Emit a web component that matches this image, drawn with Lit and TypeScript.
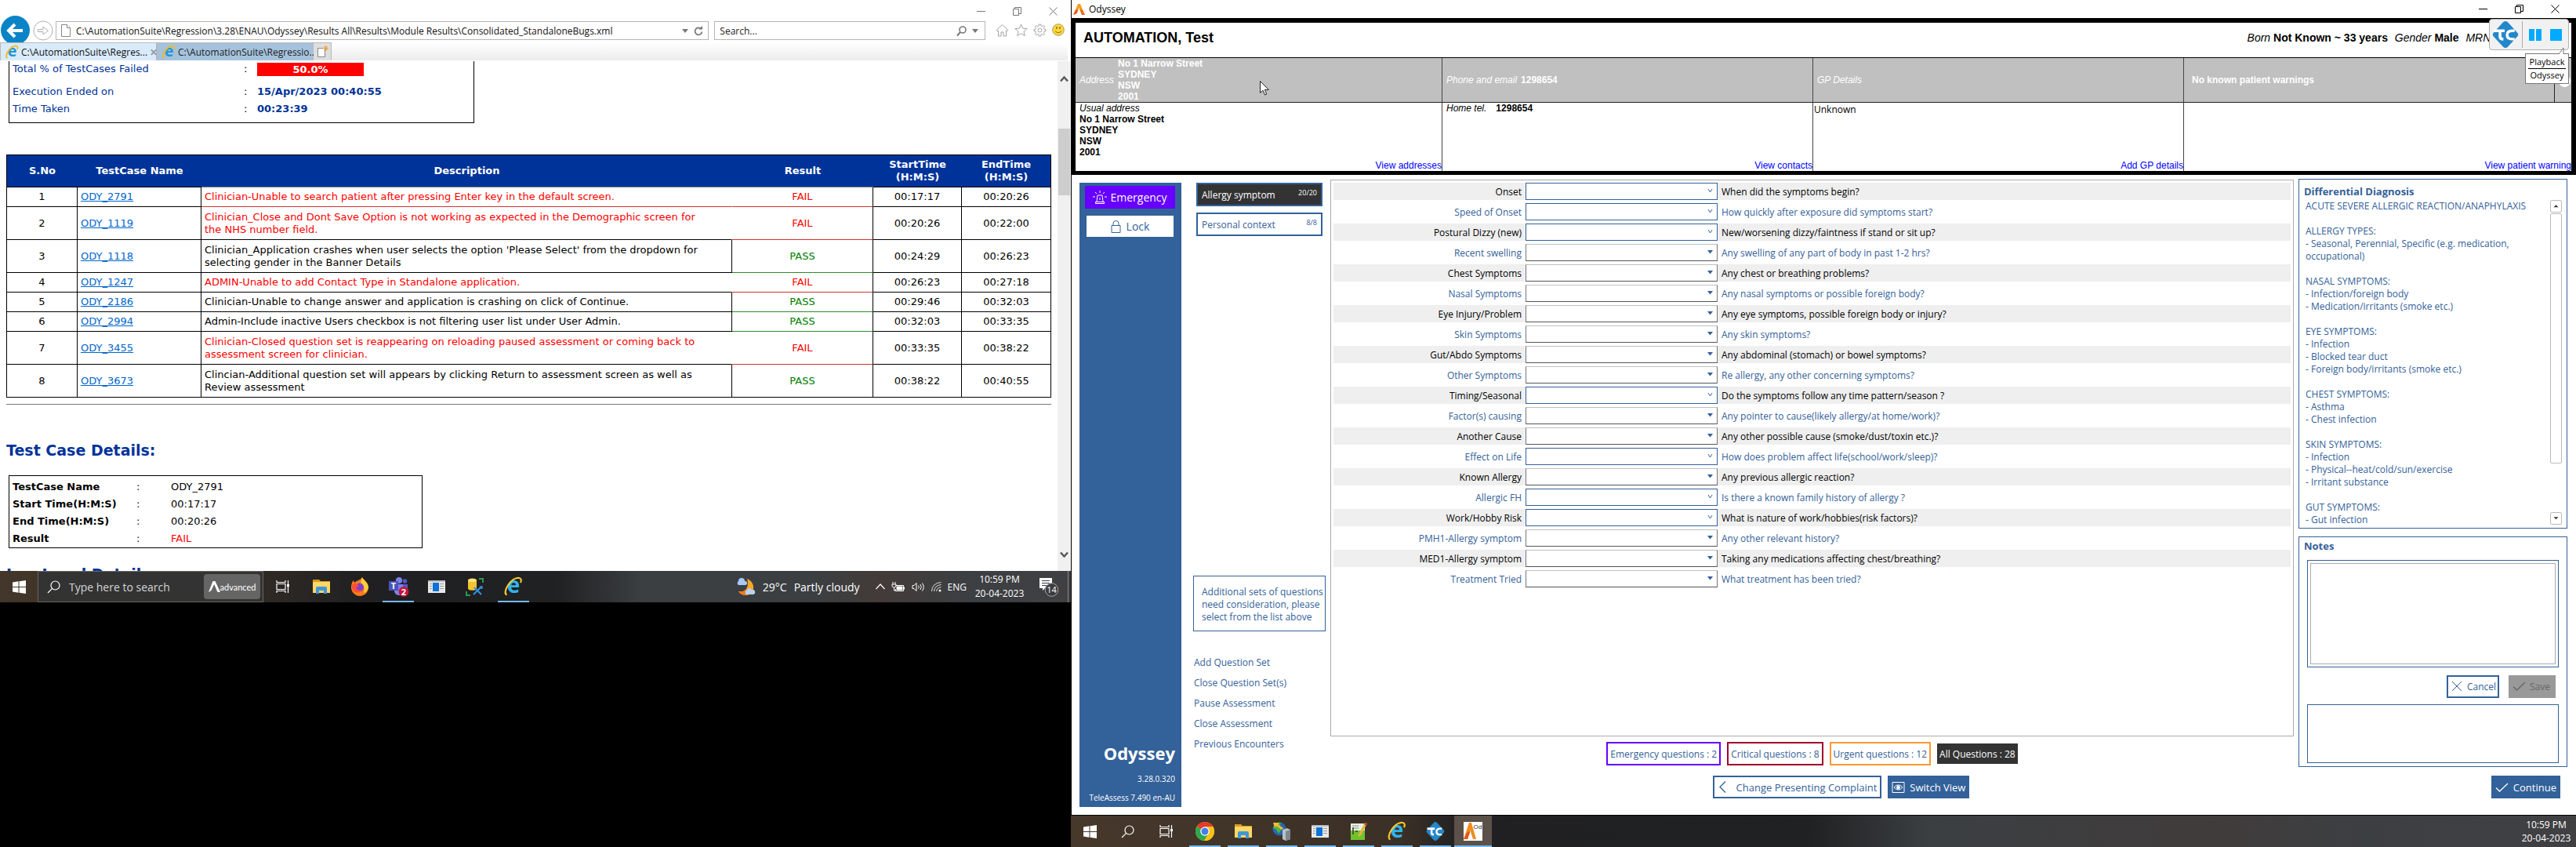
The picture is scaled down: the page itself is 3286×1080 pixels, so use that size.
import { LitElement, html, css, svg, nothing } from "lit";
import { customElement, property } from "lit/decorators.js";
import { classMap } from "lit/directives/class-map.js";

/* ---------- shared icons ---------- */

const minimizeIcon = html`<svg class="ctl" viewBox="0 0 11 11"><path d="M0 5.5h11" stroke="currentColor" /></svg>`;
const restoreIcon = html`<svg class="ctl" viewBox="0 0 11 11" fill="none" stroke="currentColor">
  <path d="M.5 2.5h7v8h-7z" /><path d="M2.5 2.5v-2h8v8h-3" />
</svg>`;
const closeIcon = html`<svg class="ctl" viewBox="0 0 11 11"><path d="M.5.5l10 10M10.5.5l-10 10" stroke="currentColor" /></svg>`;

const windowsIcon = html`<svg width="17" height="17" viewBox="0 0 17 17" fill="#fff">
  <path d="M0 2.4 7.5 1.3v6.7H0zM8.5 1.2 17 0v8H8.5zM0 9h7.5v6.7L0 14.6zM8.5 9H17v8l-8.5-1.2z" />
</svg>`;
const lensIcon = html`<svg width="17" height="17" viewBox="0 0 17 17" fill="none" stroke="#fff" stroke-width="1.2">
  <circle cx="10.5" cy="6.5" r="5.5" /><path d="M6.6 10.4 1 16" />
</svg>`;
const taskViewIcon = html`<svg width="18" height="16" viewBox="0 0 18 16" fill="none" stroke="#fff" stroke-width="1.2">
  <path d="M1 0v2.5h11V0M1 16v-2.5h11V16M1 4.5h11v7H1zM15.5 0v16" /><path d="M14 5h3v3h-3z" fill="#fff" stroke="none" />
</svg>`;
const folderIcon = html`<svg width="24" height="22" viewBox="0 0 24 22">
  <path d="M1 2h8l2 2h12v15H1z" fill="#d99b1c" /><path d="M1 5h22v14H1z" fill="#ffd766" />
  <path d="M5 20v-7q0-2 2-2h10q2 0 2 2v7h-4v-4H9v4z" fill="#3f97d8" />
</svg>`;
const firefoxIcon = html`<svg width="24" height="24" viewBox="0 0 24 24">
  <path d="M12 3c2-1 2-2 3-3 1 3 7 6 8 12 .5 7-5 12-11 12S1 19 1 13C1 9 2 6 4 4l1 3c2-2 5-3 7-4z" fill="#ff7b1c" />
  <path d="M15 0c1 3 7 6 8 12 0 4-3 7-6 8 2-7-1-11-4-13 1-3 1-5 2-7z" fill="#ffcf3a" />
  <circle cx="11.5" cy="13" r="5.5" fill="#7a3fd0" /><path d="M2 10c3-3 6-2 8 0 1 2-1 3-3 3 1 4 6 5 10 2-2 5-12 7-15-1z" fill="#ff4f38" />
</svg>`;
const teamsIcon = html`<svg width="26" height="26" viewBox="0 0 26 26">
  <circle cx="14" cy="5" r="4" fill="#7b83eb" /><circle cx="21.5" cy="6" r="2.8" fill="#5059c9" />
  <path d="M17 10h8v7q0 4-4 4h-4z" fill="#5059c9" /><path d="M8 10h11v9q0 5-5 5t-6-5z" fill="#7b83eb" />
  <path d="M1 6h12v12H1z" fill="#4b53bc" />
  <text x="7" y="16" font-size="11" font-weight="bold" text-anchor="middle" fill="#fff">T</text>
  <circle cx="20" cy="19.5" r="6.5" fill="#c4153c" />
  <text x="20" y="23.5" font-size="11" font-weight="bold" text-anchor="middle" fill="#fff">2</text>
</svg>`;
const appWindowIcon = html`<svg width="22" height="16" viewBox="0 0 22 16">
  <path d="M0 0h22v16H0z" fill="#e9e9e9" /><path d="M0 0h22v2H0z" fill="#bcbcbc" />
  <path d="M6 3h8v11H6z" fill="#0a72d8" /><path d="M2 4h3v1H2zM2 7h3v1H2zM2 10h3v1H2zM15 4h5v1h-5zM15 7h5v1h-5zM15 10h5v1h-5z" fill="#9a9a9a" />
</svg>`;
const databaseIcon = html`<svg width="23" height="23" viewBox="0 0 23 23">
  <path d="M17 1h5v5M6 22H1v-5" fill="none" stroke="#2b9a4b" stroke-width="2" />
  <path d="M3 2.5v11c0 3 11 3 11 0v-11z" fill="#f3c230" /><ellipse cx="8.5" cy="2.8" rx="5.5" ry="2.3" fill="#ffe37a" />
  <path d="M10 21l9-9M11 12l9 9" stroke="#2f8fe0" stroke-width="2.2" /><circle cx="20" cy="12" r="2" fill="#2f8fe0" />
</svg>`;
const explorerIcon = html`<svg width="24" height="24" viewBox="0 0 24 24">
  <text x="12" y="20" font-size="28" font-weight="bold" text-anchor="middle" fill="#2fb4ee">e</text>
  <path d="M3.5 22.5C-3 20 9-1 19.500 1c3 .6 2.500 4 1.500 6" fill="none" stroke="#f6c52c" stroke-width="2.2" />
</svg>`;
const smallExplorerIcon = html`<svg width="17" height="17" viewBox="0 0 24 24">
  <text x="12" y="20" font-size="28" font-weight="bold" text-anchor="middle" fill="#2396d8">e</text>
  <path d="M3.5 22.5C-3 20 9-1 19.500 1c3 .6 2.500 4 1.500 6" fill="none" stroke="#f0b926" stroke-width="2.6" />
</svg>`;
const chromeIcon = html`<svg width="24" height="24" viewBox="0 0 24 24">
  <circle cx="12" cy="12" r="12" fill="#fbc116" />
  <path d="M12 12 1.600 6A12 12 0 0 1 22.400 6z" fill="#e33b2e" /><path d="M1.600 6A12 12 0 0 0 11 24l5.500-9.500L12 12z" fill="#2da94f" />
  <path d="M12 6h10.400A12 12 0 0 1 11 24l6-9z" fill="#fbc116" />
  <circle cx="12" cy="12" r="5.8" fill="#fff" /><circle cx="12" cy="12" r="4.5" fill="#4080ee" />
</svg>`;
const serverIcon = html`<svg width="24" height="24" viewBox="0 0 24 24">
  <circle cx="9" cy="9" r="8.5" fill="#2368b4" /><path d="M3 4q4-4 8-3l-2 5 3 3-4 6-3-5-4-2z" fill="#56b043" />
  <path d="M1 1h8l-2 2 7 5-2 2-7-5-2 2z" fill="#f6c02e" />
  <path d="M13 10l6-2 4 2v12l-6 2-4-2z" fill="#b9c1c6" /><path d="M17 12l6-2v12l-6 2z" fill="#7d878d" />
</svg>`;
const noteEditIcon = html`<svg width="22" height="24" viewBox="0 0 22 24">
  <path d="M1 2h18v21H1z" fill="#e6eee0" /><path d="M1 11h18v12H1z" fill="#6fc22d" />
  <path d="M3 5h8M3 8h8" stroke="#8a9b85" /><path d="M4 7v9M7 12h3" stroke="#3a3a3a" stroke-width="1.5" />
  <path d="M11 16 19 1l3 1-8 15-3 2z" fill="#e9b23c" /><path d="m19 1 3 1-1 3-3-2z" fill="#c14536" />
</svg>`;
const odysseyAppIcon = html`<svg width="24" height="24" viewBox="0 0 24 24">
  <path d="M0 0h24v24H0z" fill="#fff" />
  <path d="M7 1h3l6 21h-4L8.500 11 5 22H0z" fill="#f28c1c" /><path d="M5 13 0 22h5l3.500-10z" fill="#e4531b" />
  <text x="18" y="9" font-size="8" text-anchor="middle" fill="#333">Od</text>
</svg>`;
const testCompleteIcon = (size: number) => html`<svg width=${size} height=${size} viewBox="0 0 32 32">
  <path d="M16 0q2 0 3 1.500L30.500 14q1.500 2 0 4L19 30.500q-3 3-6 0L1.500 18q-1.500-2 0-4L13 1.500Q14 0 16 0z" fill="#2487c9" />
  <path d="M2 11.500h13M9.500 11.500v7q0 3 4 3" fill="none" stroke="#fff" stroke-width="3.4" />
  <path d="M27 11.500h-3q-6 0-6 5t6 5h3" fill="none" stroke="#fff" stroke-width="3.2" />
</svg>`;

/* ---------- taskbar ---------- */

interface TaskItem { name: string; icon: unknown; running?: boolean; active?: boolean; }

@customElement("task-bar")
export class TaskBar extends LitElement {
  @property({ attribute: false }) items: TaskItem[] = [];
  @property({ type: Boolean }) full = false;

  static styles = css`
    :host { display: block; font-family: "Open Sans", "Noto Sans", sans-serif; color: #fff; }
    svg { overflow: visible; }
    .bar { display: flex; align-items: stretch; height: 40px; background: linear-gradient(90deg, #43362a 0, #3a3026 18%, #202022 34%, #202122 52%, #3b3f42 60%, #3b3f42 76%, #433b38 82%, #3c3f42 90%, #404043 100%); }
    .bar.full { background: linear-gradient(90deg, #46382b 0, #3b3026 22%, #202022 26%, #202122 49%, #3b3f42 57%, #413c3c 76%, #3c3f42 86%, #404043 100%); }
    button { all: unset; box-sizing: border-box; display: flex; align-items: center; justify-content: center; width: 49px; }
    button.start { width: 48px; }
    button.running { border-bottom: 2px solid #76b9ed; margin: 0 4px 0 5px; width: 40px; padding-top: 2px; }
    button.active { background: #5b5148; margin: 0; width: 48px; }
    .search { display: flex; align-items: center; box-sizing: border-box; width: 288px; background: #333; border: 1px solid #6a665f; padding: 0 3px 0 11px; gap: 11px; }
    .search input { all: unset; flex: 1; min-width: 0; font-size: 14px; color: #ddd; }
    .search input::placeholder { color: #d5d5d5; opacity: 1; }
    .chip { display: flex; align-items: center; justify-content: center; width: 72px; height: 32px; border-radius: 4px; background: #656565; font-size: 11px; font-family: Lato, sans-serif; }
    .grow { flex: 1; }
    .weather { display: flex; align-items: center; gap: 9px; font-size: 14px; margin-right: 20px; }
    .tray { display: flex; align-items: center; gap: 8px; font-size: 12px; }
    .clock { display: flex; flex-direction: column; align-items: center; justify-content: center; font-size: 12px; line-height: 18px; width: 84px; }
    .full .clock { padding-right: 4px; width: 68px; line-height: 17px; }
    .notes { width: 42px; display: flex; align-items: center; justify-content: center; margin-right: 3px; }
    .edge { width: 3px; border-left: 1px solid #85878a; }
  `;

  render() {
    return html`<div class=${classMap({ bar: true, full: this.full })}>
      <button class="start" aria-label="Start">${windowsIcon}</button>
      ${this.full
        ? html`<button aria-label="Search">${lensIcon}</button>`
        : html`<div class="search">
            ${lensIcon}
            <input type="text" aria-label="Type here to search" placeholder="Type here to search" />
            <span class="chip">
              <svg width="15" height="14" viewBox="0 0 15 14"><path d="M5.500 0h3L15 14h-3.500L7.200 4 3.500 12 0 14z" fill="#fff" /></svg>advanced
            </span>
          </div>`}
      <button aria-label="Task view">${taskViewIcon}</button>
      ${this.items.map((item) => html`<button class=${classMap({ running: !!item.running, active: !!item.active })} aria-label=${item.name}>${item.icon}</button>`)}
      <span class="grow"></span>
      ${this.full ? nothing : html`
        <div class="weather">
          <svg width="25" height="23" viewBox="0 0 25 23">
            <path d="M14 1c12 5 10 20-1 21-5 0-8-2-10-5 10 2 14-7 11-16z" fill="#f9a825" />
            <path d="M3 17c5 1 9 0 11-4l6 5c-5 5-13 5-17-1z" fill="#ef7a1c" />
            <path d="M3 9a3 3 0 0 1 0-5 4 4 0 0 1 8 0 2.500 2.500 0 0 1 1 5z" fill="#a9c8f5" />
            <path d="M13 21a3 3 0 0 1 0-5 4 4 0 0 1 7-1 3 3 0 0 1 2 6z" fill="#b8d2f7" />
          </svg>
          <span>29°C</span><span>Partly cloudy</span>
        </div>
        <div class="tray">
          <svg width="12" height="8" viewBox="0 0 12 8"><path d="m.5 7 5.500-6 5.500 6" fill="none" stroke="#fff" stroke-width="1.2" /></svg>
          <svg width="18" height="13" viewBox="0 0 18 13" fill="none" stroke="#fff"><path d="M5.500 4.500h10v7h-10V9M16.500 6.500v3M2 0v3M5 0v3M1 3h5v2q0 2-2.500 2T1 5zM3.500 7v4h2" /><path d="M7 6h7v4H7z" fill="#fff" /></svg>
          <svg width="17" height="13" viewBox="0 0 17 13" fill="none" stroke="#fff"><path d="M1 4.500h2l3-3v10l-3-3H1zM8.500 4.500q1.500 2 0 4M11 3q2.500 3.500 0 7M13.500 1.500q3.500 5 0 10" /></svg>
          <svg width="13" height="13" viewBox="0 0 13 13" fill="none" stroke="#ddd"><path d="M.5 12Q1 1.500 12.500.5M3.500 12q.5-7.500 9-8.500M6.500 12q.5-4.500 6-5.500" /><circle cx="11" cy="11" r="1.5" fill="#fff" stroke="none" /></svg>
          <span>ENG</span>
        </div>`}
      <div class="clock"><span>10:59 PM</span><span>20-04-2023</span></div>
      ${this.full ? nothing : html`
        <div class="notes">
          <svg width="26" height="26" viewBox="0 0 26 26">
            <path d="M1 2h16v13H8l-3 3v-3H1z" fill="#fff" /><path d="M4 5.500h10M4 8.500h10M4 11.500h7" stroke="#3a3d40" />
            <circle cx="16.5" cy="17" r="8.3" fill="#3a3d40" stroke="#a5a5a5" />
            <text x="16.5" y="21" font-size="11" text-anchor="middle" fill="#fff">14</text>
          </svg>
        </div>
        <span class="edge"></span>`}
    </div>`;
  }
}

/* ---------- browser with the test report ---------- */

interface TestRow { id: string; text: string; pass: boolean; start: string; end: string; tall?: boolean; }

const testRows: TestRow[] = [
  { id: "ODY_2791", text: "Clinician-Unable to search patient after pressing Enter key in the default screen.", pass: false, start: "00:17:17", end: "00:20:26" },
  { id: "ODY_1119", text: "Clinician_Close and Dont Save Option is not working as expected in the Demographic screen for the NHS number field.", pass: false, start: "00:20:26", end: "00:22:00", tall: true },
  { id: "ODY_1118", text: "Clinician_Application crashes when user selects the option 'Please Select' from the dropdown for selecting gender in the Banner Details", pass: true, start: "00:24:29", end: "00:26:23", tall: true },
  { id: "ODY_1247", text: "ADMIN-Unable to add Contact Type in Standalone application.", pass: false, start: "00:26:23", end: "00:27:18" },
  { id: "ODY_2186", text: "Clinician-Unable to change answer and application is crashing on click of Continue.", pass: true, start: "00:29:46", end: "00:32:03" },
  { id: "ODY_2994", text: "Admin-Include inactive Users checkbox is not filtering user list under User Admin.", pass: true, start: "00:32:03", end: "00:33:35" },
  { id: "ODY_3455", text: "Clinician-Closed question set is reappearing on reloading paused assessment or coming back to assessment screen for clinician.", pass: false, start: "00:33:35", end: "00:38:22", tall: true },
  { id: "ODY_3673", text: "Clincian-Additional question set will appears by clicking Return to assessment screen as well as Review assessment", pass: true, start: "00:38:22", end: "00:40:55", tall: true },
];

@customElement("report-browser")
export class ReportBrowser extends LitElement {
  static styles = css`
    :host { display: flex; flex-direction: column; min-height: 0; background: #fff; font-family: "Open Sans", "Noto Sans", sans-serif; font-size: 12px; color: #111; }
    svg { flex: none; overflow: visible; }
    .title { display: flex; justify-content: flex-end; height: 20px; color: #777; }
    .title button, .tools button { all: unset; display: flex; justify-content: center; align-items: center; }
    .title button { width: 46px; padding-top: 8px; }
    .ctl { width: 11px; height: 11px; }
    .nav { display: flex; height: 34px; padding-right: 4px; }
    .nav > a { display: flex; }
    .back svg { overflow: hidden; }
    .forward { padding: 6px 3px 0 4px; }
    .field { display: flex; align-items: center; box-sizing: border-box; height: 24px; margin-top: 7px; border: 1px solid #b5b5b5; padding: 0 6px; gap: 7px; }
    .address { flex: 840; margin-right: 7px; }
    .find { flex: 338; margin-right: 9px; padding-right: 8px; }
    .field input { all: unset; flex: 1; min-width: 0; font-size: 12px; height: 20px; }
    .field input::placeholder { color: #222; opacity: 1; }
    .tools { display: flex; height: 24px; margin-top: 6px; }
    .tools button { width: 24px; }
    .tabs { display: flex; height: 23px; background: linear-gradient(#fff, #ececec); margin-bottom: 1px; border-right: 4px solid #fff; }
    .tab { display: flex; align-items: center; box-sizing: border-box; width: 200px; padding: 0 4px 0 6px; gap: 3px; border: 1px solid #b9b9b9; border-bottom: 0; background: #d9ebfa; white-space: nowrap; }
    .tab.other { background: #a5c2dc; color: #222; }
    .tab .x { margin-left: auto; color: #8c9aa6; font-weight: bold; }
    .new { display: flex; align-items: center; justify-content: center; width: 23px; box-sizing: border-box; border: 1px solid #b9b9b9; border-left: 0; border-bottom: 0; background: #dedede; }
    .view { display: flex; flex: 1; min-height: 0; }
    .page { flex: 1; min-width: 0; overflow: hidden; padding: 0 8px; font-family: "DejaVu Sans", sans-serif; font-size: 13px; line-height: 16px; color: #000; }
    .bar { flex: none; display: flex; flex-direction: column; align-items: center; width: 17px; background: #f0f0f0; }
    .bar .thumb { width: 15px; height: 85px; background: #cdcdcd; margin: 59px 0 auto; }
    .bar svg { margin: 18px 0 0; }
    .bar svg.down { margin: 0 0 16px; }
    table { border-spacing: 0; }
    .box { border: 1px solid #000; margin-left: 3px; padding: 0 4px; line-height: 22px; table-layout: fixed; }
    .box td, .box th { padding: 0; text-align: left; height: 22px; }
    .summary { width: 594px; border-top: 0; padding-bottom: 6px; color: #039; }
    .summary th { font-weight: normal; }
    .summary .first td, .summary .first th { height: 20px; line-height: 20px; }
    .summary .second td, .summary .second th { padding-top: 8px; }
    .summary td { font-weight: bold; }
    .summary td.colon { font-weight: normal; color: #000; }
    .failed { display: block; width: 136px; height: 17px; line-height: 18px; background: red; color: #fff; text-align: center; }
    .results { width: 100%; margin-top: 40px; table-layout: fixed; border-left: 1px solid #000; }
    .results th { height: 42px; box-sizing: border-box; padding: 0; background: #039; color: #fff; border-top: 1px solid #000; border-bottom: 1px solid #000; }
    .results th.open { border-bottom-color: #777; }
    .results th:last-child { border-right: 1px solid #000; }
    .results td { box-sizing: border-box; height: 25px; padding: 4px; border-right: 1px solid #000; border-bottom: 1px solid #000; text-align: center; }
    .results .tall td { height: 42px; }
    .results td.left { text-align: left; }
    .results td.desc { padding-right: 32px; }
    .fail td.desc { color: red; border-right-color: transparent; }
    .fail:first-child td.desc { border-bottom-color: #c33; }
    .fail td.result { color: red; border-bottom-color: #c33; }
    .pass td.result { color: green; border-bottom-color: #2e8b2e; }
    tr:last-child td.result { border-bottom-color: #000; }
    .results a { color: #06c; }
    hr { border: 0; height: 1px; background: #777; margin: 8px 0 46px; }
    h2 { margin: 0 0 20px; font-size: 19px; line-height: 24px; color: #039; }
    .case { width: 528px; padding-top: 3px; margin-bottom: 21px; }
    .case .bad { color: red; }
  `;

  render() {
    return html`
      <div class="title">
        <button aria-label="Minimize">${minimizeIcon}</button>
        <button aria-label="Restore">${restoreIcon}</button>
        <button aria-label="Close">${closeIcon}</button>
      </div>
      <div class="nav">
        <a class="back" href="#" aria-label="Back"><svg width="38" height="34" viewBox="0 0 38 34"><circle cx="19.5" cy="18.5" r="18.5" fill="#0a84c6" /><path d="M29 19H12M19 11l-8 8 8 8" fill="none" stroke="#fff" stroke-width="4" /></svg></a>
        <a class="forward" href="#" aria-label="Forward"><svg width="26" height="26" viewBox="0 0 26 26" fill="none" stroke="#b0b0b0"><circle cx="13" cy="13" r="12" /><path d="M6.500 11.500h6.500V8l6.500 5-6.500 5v-3.500H6.500z" /></svg></a>
        <div class="field address">
          <svg width="12" height="16" viewBox="0 0 12 16" fill="#fff" stroke="#888"><path d="M.5.500h7l4 4v11H.5z" /><path d="M7.500.5v4h4" /></svg>
          <input type="text" aria-label="Address" .value=${"C:\\AutomationSuite\\Regression\\3.28\\ENAU\\Odyssey\\Results All\\Results\\Module Results\\Consolidated_StandaloneBugs.xml"} />
          <svg width="8" height="5" viewBox="0 0 8 5"><path d="M0 0h8L4 5z" fill="#777" /></svg>
          <svg width="12" height="13" viewBox="0 0 12 13"><path d="M9.500 4A4.500 4.500 0 1 0 10.500 7.500" fill="none" stroke="#777" stroke-width="1.8" /><path d="M6 4.500h5V0z" fill="#777" /></svg>
        </div>
        <div class="field find">
          <input type="text" aria-label="Search" placeholder="Search..." />
          <svg width="13" height="13" viewBox="0 0 13 13" fill="none" stroke="#777" stroke-width="1.6"><circle cx="8" cy="5" r="4" /><path d="M5 8 1 12.500" stroke-width="2" /></svg>
          <svg width="8" height="5" viewBox="0 0 8 5"><path d="M0 0h8L4 5z" fill="#777" /></svg>
        </div>
        <div class="tools">
          <button aria-label="Home"><svg width="17" height="17" viewBox="0 0 17 17" fill="none" stroke="#a3a3a3"><path d="m1 8.500 7.500-7 7.500 7-1.500 1.300-1-.9V16h-3.500v-5h-3v5H3.500V8.900l-1 .9z" /></svg></button>
          <button aria-label="Favorites"><svg width="17" height="17" viewBox="0 0 17 17" fill="none" stroke="#a3a3a3"><path d="m8.500 1 2.200 5.200 5.500.4-4.200 3.600 1.300 5.500-4.800-3-4.800 3L5 10.200.8 6.600l5.500-.4z" /></svg></button>
          <button aria-label="Tools"><svg width="17" height="17" viewBox="0 0 17 17" fill="none" stroke="#a3a3a3"><circle cx="8.5" cy="8.5" r="2.5" /><path d="M7.500 1h2l.4 2 1.500.7 1.700-1.200 1.500 1.500-1.200 1.700.6 1.500 2 .4v2l-2 .4-.6 1.500 1.200 1.700-1.500 1.500-1.700-1.200-1.500.6-.4 2h-2l-.4-2-1.500-.6-1.700 1.200-1.500-1.500 1.200-1.700L3 10 1 9.600v-2L3 7.200l.6-1.500L2.400 4l1.500-1.500 1.700 1.200L7.100 3z" /></svg></button>
          <button aria-label="Feedback"><svg width="16" height="16" viewBox="0 0 16 16"><circle cx="8" cy="8" r="7.3" fill="#ffd83c" stroke="#a89a6a" /><path d="M6 4v3M10 4v3" stroke="#8a6d1a" stroke-width="1.5" /><path d="M4 9.500q4 4.500 8 0" fill="none" stroke="#8a6d1a" /></svg></button>
        </div>
      </div>
      <div class="tabs">
        <div class="tab">${smallExplorerIcon}<span>C:\\AutomationSuite\\Regres...</span><span class="x">✕</span></div>
        <div class="tab other">${smallExplorerIcon}<span>C:\\AutomationSuite\\Regressio...</span></div>
        <div class="new"><svg width="15" height="16" viewBox="0 0 15 16"><path d="M1.500 3.500h9v11h-9z" fill="#fff" stroke="#888" /><path d="M11.500 0v7M8 3.500h7M9 1l5 5M14 1 9 6" stroke="#f0a030" /></svg></div>
      </div>
      <div class="view">
        <div class="page">
          <table class="box summary">
            <colgroup><col style="width:295px" /><col style="width:17px" /><col /></colgroup>
            <tr class="first"><th>Total % of TestCases Failed</th><td class="colon">:</td><td><span class="failed">50.0%</span></td></tr>
            <tr class="second"><th>Execution Ended on</th><td class="colon">:</td><td>15/Apr/2023 00:40:55</td></tr>
            <tr><th>Time Taken</th><td class="colon">:</td><td>00:23:39</td></tr>
          </table>
          <table class="results">
            <colgroup><col style="width:90px" /><col style="width:158px" /><col /><col style="width:180px" /><col style="width:113px" /><col style="width:114px" /></colgroup>
            <thead><tr><th>S.No</th><th>TestCase Name</th><th class="open">Description</th><th class="open">Result</th><th>StartTime<br />(H:M:S)</th><th>EndTime<br />(H:M:S)</th></tr></thead>
            <tbody>
              ${testRows.map((row, i) => html`<tr class=${classMap({ tall: !!row.tall, pass: row.pass, fail: !row.pass })}>
                <td>${i + 1}</td><td class="left"><a href="#${row.id}">${row.id}</a></td><td class="left desc">${row.text}</td>
                <td class="result">${row.pass ? "PASS" : "FAIL"}</td><td>${row.start}</td><td>${row.end}</td>
              </tr>`)}
            </tbody>
          </table>
          <hr />
          <h2>Test Case Details:</h2>
          <table class="box case">
            <colgroup><col style="width:158px" /><col style="width:44px" /><col /></colgroup>
            <tr><th>TestCase Name</th><td>:</td><td>ODY_2791</td></tr>
            <tr><th>Start Time(H:M:S)</th><td>:</td><td>00:17:17</td></tr>
            <tr><th>End Time(H:M:S)</th><td>:</td><td>00:20:26</td></tr>
            <tr><th>Result</th><td>:</td><td class="bad">FAIL</td></tr>
          </table>
          <h2>Log Level Details:</h2>
        </div>
        <div class="bar" aria-hidden="true">
          <svg width="11" height="9" viewBox="0 0 11 9"><path d="m1 7.500 4.500-5 4.500 5" fill="none" stroke="#555" stroke-width="2.4" /></svg>
          <span class="thumb"></span>
          <svg class="down" width="11" height="9" viewBox="0 0 11 9"><path d="m1 1.500 4.500 5 4.500-5" fill="none" stroke="#555" stroke-width="2.4" /></svg>
        </div>
      </div>`;
  }
}

/* ---------- Odyssey client ---------- */

interface Question { label: string; text: string; multi?: boolean; }

const questions: Question[] = [
  { label: "Onset", text: "When did the symptoms begin?", multi: true },
  { label: "Speed of Onset", text: "How quickly after exposure did symptoms start?", multi: true },
  { label: "Postural Dizzy (new)", text: "New/worsening dizzy/faintness if stand or sit up?", multi: true },
  { label: "Recent swelling", text: "Any swelling of any part of body in past 1-2 hrs?" },
  { label: "Chest Symptoms", text: "Any chest or breathing problems?" },
  { label: "Nasal Symptoms", text: "Any nasal symptoms or possible foreign body?" },
  { label: "Eye Injury/Problem", text: "Any eye symptoms, possible foreign body or injury?" },
  { label: "Skin Symptoms", text: "Any skin symptoms?" },
  { label: "Gut/Abdo Symptoms", text: "Any abdominal (stomach) or bowel symptoms?" },
  { label: "Other Symptoms", text: "Re allergy, any other concerning symptoms?" },
  { label: "Timing/Seasonal", text: "Do the symptoms follow any time pattern/season ?", multi: true },
  { label: "Factor(s) causing", text: "Any pointer to cause(likely allergy/at home/work)?" },
  { label: "Another Cause", text: "Any other possible cause (smoke/dust/toxin etc.)?" },
  { label: "Effect on Life", text: "How does problem affect life(school/work/sleep)?", multi: true },
  { label: "Known Allergy", text: "Any previous allergic reaction?" },
  { label: "Allergic FH", text: "Is there a known family history of allergy ?", multi: true },
  { label: "Work/Hobby Risk", text: "What is nature of work/hobbies(risk factors)?", multi: true },
  { label: "PMH1-Allergy symptom", text: "Any other relevant history?" },
  { label: "MED1-Allergy symptom", text: "Taking any medications affecting chest/breathing?" },
  { label: "Treatment Tried", text: "What treatment has been tried?" },
];

const diagnosis = `ACUTE SEVERE ALLERGIC REACTION/ANAPHYLAXIS

ALLERGY TYPES:
- Seasonal, Perennial, Specific (e.g. medication,
occupational)

NASAL SYMPTOMS:
- Infection/foreign body
- Medication/irritants (smoke etc.)

EYE SYMPTOMS:
- Infection
- Blocked tear duct
- Foreign body/irritants (smoke etc.)

CHEST SYMPTOMS:
- Asthma
- Chest infection

SKIN SYMPTOMS:
- Infection
- Physical--heat/cold/sun/exercise
- Irritant substance

GUT SYMPTOMS:
- Gut infection`;

const addressLines = html`No 1 Narrow Street<br />SYDNEY<br />NSW<br />2001`;
const checkIcon = html`<svg width="17" height="12" viewBox="0 0 17 12"><path d="m1 6.500 4.500 4.500L16 1" fill="none" stroke="currentColor" stroke-width="1.3" /></svg>`;

@customElement("odyssey-window")
export class OdysseyWindow extends LitElement {
  static styles = css`
    :host { position: relative; display: flex; flex-direction: column; min-height: 0; background: #fff; border-left: 1px solid #000; border-bottom: 1px solid #000; overflow: hidden; font-family: "Open Sans", "Noto Sans", sans-serif; font-size: 12px; color: #336199; --blue: #336199; }
    svg { flex: none; }
    button { font: inherit; display: flex; align-items: center; box-sizing: border-box; padding: 0; margin: 0; border: 0; background: none; color: inherit; white-space: nowrap; }
    a { color: inherit; text-decoration: none; }
    .title { display: flex; align-items: center; height: 23px; color: #000; gap: 5px; padding: 0 6px 0 2px; }
    .title .name { flex: 1; }
    .title button { width: 41px; height: 20px; justify-content: center; }
    .ctl { width: 11px; height: 11px; }

    .banner { border: 6px solid #000; border-left-width: 5px; border-bottom-width: 5px; color: #000; font-family: "Liberation Sans", Arial, sans-serif; line-height: 14px; }
    .who { display: flex; align-items: center; height: 45px; box-sizing: border-box; padding: 0 91px 6px 10px; border-bottom: 1px solid #000; white-space: nowrap; }
    .who h1 { flex: 1; margin: 0; font-size: 18px; line-height: 20px; }
    .who p { margin: 0; font-size: 14px; line-height: 20px; }
    .who b { margin-right: 5px; }
    .cells { display: grid; grid-template-columns: 468fr 473fr 473fr 494fr; }
    .cell { display: flex; align-items: center; gap: 5px; height: 57px; box-sizing: border-box; padding: 0 5px; background: #c0c0c0; color: #fff; border-right: 1px solid #444; border-bottom: 1px solid #222; }
    .cell.plain { align-items: flex-start; gap: 12px; height: 87px; background: #fff; color: #000; border-bottom: 0; position: relative; }
    .cell:nth-child(4n) { border-right: 0; }
    .cell.warn { padding-left: 10px; }
    .cell.plain.gp { font-family: "Open Sans", sans-serif; padding: 2px 0 0 1px; }
    .cell a { position: absolute; right: 0; bottom: 0; color: #00f; font-family: "Liberation Sans", Arial, sans-serif; white-space: nowrap; }
    .side { width: 21px; align-self: stretch; border-left: 1px solid #222; margin: 0 -5px 0 auto; }

    .main { display: grid; grid-template-columns: 130px 178px minmax(0, 1fr) 343px; gap: 6px; flex: 1; min-height: 0; padding: 5px 11px 0 10px; }
    .rail { display: flex; flex-direction: column; align-items: stretch; background: var(--blue); margin: 5px 0 10px; padding: 4px 8px 0 7px; color: #fff; text-align: right; }
    .rail button { justify-content: center; font-size: 14px; }
    .emergency { height: 29px; background: #60f; gap: 4px; }
    .lock { height: 27px; margin: 9px 2px auto; background: #fff; color: var(--blue); gap: 7px; }
    .rail strong { font-size: 22px; line-height: 28px; margin-bottom: 7px; }
    .rail span { line-height: 24px; font-size: 10px; white-space: nowrap; }

    .sets { display: flex; flex-direction: column; margin-left: 9px; padding: 5px 0 77px; }
    .set { height: 30px; border: 2px solid var(--blue); margin: 0 4px 8px; padding: 0 5px; }
    .set small { margin-left: auto; font-size: 9px; margin-bottom: 6px; }
    .set.on { background: #333; color: #fff; }
    .hint { margin: auto 0 27px; border: 1px solid var(--blue); height: 71px; box-sizing: border-box; padding: 12px 0 0 10px; line-height: 16px; white-space: nowrap; }
    .links { display: flex; flex-direction: column; line-height: 26px; padding-left: 1px; }

    .work { display: flex; flex-direction: column; min-width: 0; padding: 1px 0 21px; }
    .panel { flex: 1; min-height: 0; box-sizing: border-box; border: 1px solid #ababab; padding: 3px; }
    .row { display: grid; grid-template-columns: 240px 245px minmax(0, 1fr); column-gap: 5px; align-items: center; height: 22px; margin-bottom: 4px; line-height: 20px; }
    .row:nth-child(odd) { background: #efefef; color: #000; }
    .row label, .row span { padding-top: 2px; }
    .row label { text-align: right; }
    .pick { position: relative; display: flex; }
    .pick svg { position: absolute; right: 6px; top: 8px; pointer-events: none; color: var(--blue); }
    select { appearance: none; width: 100%; height: 22px; box-sizing: border-box; border: 1px solid #777; border-top-color: #c0c0c0; border-bottom-color: #555; border-radius: 0; background: #fff; font: inherit; padding: 0 4px; }
    .multi select { border-color: var(--blue); }
    .filters { display: flex; justify-content: center; align-items: center; gap: 8px; margin: 7px 0 13px; }
    .filters button { height: 30px; padding: 0 3px; border: 2px solid var(--tone); }
    .filters .e { --tone: #60f; }
    .filters .c { --tone: #a00028; }
    .filters .u { --tone: #f93; }
    .filters .all { height: 26px; border: 0; background: #333; color: #fff; }
    .actions { display: flex; justify-content: center; gap: 8px; padding-left: 74px; }
    .action { height: 29px; border: 2px solid var(--blue); padding: 0 4px; font-size: 13px; gap: 12px; }
    .solid { background: var(--blue); color: #fff; gap: 6px; padding: 0 3px; }

    .aside { display: flex; flex-direction: column; min-width: 0; padding-bottom: 21px; }
    .card { box-sizing: border-box; border: 1px solid var(--blue); padding: 4px 6px; }
    h2 { margin: 0; font-size: 13px; line-height: 22px; }
    .diag { display: flex; flex-direction: column; flex: 445; min-height: 0; margin-bottom: 10px; }
    .scroll { display: flex; flex: 1; min-height: 0; }
    .scroll p { flex: 1; margin: 0; padding-left: 2px; white-space: pre; line-height: 16px; font-variant-ligatures: none; }
    .sb { display: flex; flex-direction: column; width: 15px; }
    .sb i { flex: 1; margin: 1px 0 62px; border: 1px solid #bbb; border-radius: 2px; }
    .sb svg { border: 1px solid #bbb; border-radius: 2px; box-sizing: border-box; }
    .notes { display: flex; flex-direction: column; padding-top: 0; flex: 294; min-height: 0; }
    textarea { display: block; box-sizing: border-box; resize: none; width: auto; margin: 0 4px; outline: 0; font: inherit; background: #fff; border: 1px solid var(--blue); border-radius: 0; flex: 74; min-height: 0; }
    .frame { display: flex; flex: 137; min-height: 0; border: 1px solid var(--blue); margin: 7px 4px 10px; padding: 3px; box-sizing: border-box; }
    .frame textarea { flex: 1; margin: 0; border-color: #ababab; }
    .notes .btns { display: flex; justify-content: flex-end; gap: 12px; margin: 0 8px 8px 0; }
    .notes .action { font-size: 12px; padding: 0 4px; width: 67px; gap: 6px; }
    .notes .save { width: 60px; border: 0; background: #999; color: #666; gap: 5px; padding: 0 5px; }
    .continue { align-self: flex-end; margin: 11px 9px 0 0; }

    .recorder { position: absolute; right: 9px; top: 24px; display: flex; align-items: center; width: 102px; height: 40px; box-sizing: border-box; border: 1px solid #b0b0b0; border-radius: 4px; background: #f1f1f1; padding-left: 3px; }
    .recorder i { align-self: stretch; margin: 2px 8px 2px 4px; border-left: 1px solid #aaa; }
    .recorder button { margin-right: 11px; }
    .tip { position: absolute; right: 9px; top: 68px; width: 56px; box-sizing: border-box; height: 39px; border: 1px solid #777; background: #fff; color: #000; padding: 2px 3px; text-align: center; line-height: 16px; font-size: 11px; }
    .tip span { display: block; border-bottom: 1px solid #000; }
    .tip svg { position: absolute; right: 4px; top: -9px; }
    .dot { position: absolute; right: 7px; top: 96px; width: 15px; height: 15px; border-radius: 50%; background: #fff; }
    .cursor { position: absolute; left: 240px; top: 103px; }
  `;

  render() {
    return html`
      <div class="title">
        <svg width="15" height="14" viewBox="0 0 15 14"><path d="M6 0h3l6 14h-4L7.500 5 4.500 12 0 14z" fill="#f5a01b" /><path d="m3 8-3 6 4.500-2 2-5z" fill="#e4531b" /><path d="m8 6 3 8h4l-3-6z" fill="#ee6c1c" /></svg>
        <span class="name">Odyssey</span>
        <button aria-label="Minimize">${minimizeIcon}</button>
        <button aria-label="Restore">${restoreIcon}</button>
        <button aria-label="Close">${closeIcon}</button>
      </div>
      <section class="banner">
        <div class="who">
          <h1>AUTOMATION, Test</h1>
          <p><i>Born</i> <b>Not Known ~ 33 years</b> <i>Gender</i> <b>Male</b> <i>MRN n</i></p>
        </div>
        <div class="cells">
          <div class="cell"><i>Address</i><b>${addressLines}</b></div>
          <div class="cell"><i>Phone and email</i><b>1298654</b></div>
          <div class="cell"><i>GP Details</i></div>
          <div class="cell warn"><b>No known patient warnings</b><span class="side"></span></div>
          <div class="cell plain"><span><i>Usual address</i><br /><b>${addressLines}</b></span><a href="#">View addresses</a></div>
          <div class="cell plain"><i>Home tel.</i><b>1298654</b><a href="#">View contacts</a></div>
          <div class="cell plain gp">Unknown<a href="#">Add GP details</a></div>
          <div class="cell plain"><a href="#">View patient warning</a></div>
        </div>
      </section>
      <div class="main">
        <div class="rail">
          <button class="emergency"><svg width="18" height="17" viewBox="0 0 18 17" fill="none" stroke="#fff"><path d="M3.500 14.500h11v2h-11zM5 14l1-8h6l1 8M9 0v3M3 2l2 2M15 2l-2 2M0 8h3M15 8h3M9 9v3" /></svg>Emergency</button>
          <button class="lock"><svg width="13" height="16" viewBox="0 0 13 16" fill="none" stroke="#336199"><path d="M1 6.500h11v9H1zM3 6V4q0-3.500 3.500-3.500T10 4v2" /></svg>Lock</button>
          <strong>Odyssey</strong><span>3.28.0.320</span><span>TeleAssess 7.490 en-AU</span>
        </div>
        <div class="sets">
          <button class="set on">Allergy symptom<small>20/20</small></button>
          <button class="set">Personal context<small>8/8</small></button>
          <div class="hint">Additional sets of questions<br />need consideration, please<br />select from the list above</div>
          <nav class="links">
            <a href="#">Add Question Set</a><a href="#">Close Question Set(s)</a><a href="#">Pause Assessment</a><a href="#">Close Assessment</a><a href="#">Previous Encounters</a>
          </nav>
        </div>
        <div class="work">
          <div class="panel">
            ${questions.map((q, i) => html`<div class="row">
              <label for="q${i}">${q.label}</label>
              <div class=${classMap({ pick: true, multi: !!q.multi })}>
                <select id="q${i}"><option></option></select>
                <svg width="7" height="5" viewBox="0 0 7 5">${q.multi
                  ? svg`<path d="M1 0l2.500 4L6 0" fill="none" stroke="currentColor" />`
                  : svg`<path d="M0 0h7L3.500 4.500z" fill="currentColor" />`}</svg>
              </div>
              <span>${q.text}</span>
            </div>`)}
          </div>
          <div class="filters">
            <button class="e">Emergency questions : 2</button><button class="c">Critical questions : 8</button>
            <button class="u">Urgent questions : 12</button><button class="all">All Questions : 28</button>
          </div>
          <div class="actions">
            <button class="action"><svg width="12" height="15" viewBox="0 0 12 15"><path d="m10 .5-7 7 7 7" fill="none" stroke="currentColor" stroke-width="1.3" /></svg>Change Presenting Complaint</button>
            <button class="action solid"><svg width="17" height="14" viewBox="0 0 17 14" fill="none" stroke="#fff"><path d="M1 .5h15v13H1z" /><path d="M3 7q5.500-6.500 11 0-5.500 6-11 0z" /><circle cx="8.5" cy="7" r="2" fill="#fff" /></svg>Switch View</button>
          </div>
        </div>
        <div class="aside">
          <section class="card diag">
            <h2>Differential Diagnosis</h2>
            <div class="scroll">
              <p>${diagnosis}</p>
              <div class="sb" aria-hidden="true">
                <svg width="15" height="16" viewBox="0 0 15 16"><path d="M4 9.500h7L7.500 6z" fill="#333" /></svg>
                <i></i>
                <svg width="15" height="16" viewBox="0 0 15 16"><path d="M4 6h7l-3.500 3.500z" fill="#333" /></svg>
              </div>
            </div>
          </section>
          <section class="card notes">
            <h2>Notes</h2>
            <div class="frame"><textarea aria-label="Notes"></textarea></div>
            <div class="btns">
              <button class="action"><svg width="14" height="14" viewBox="0 0 14 14"><path d="m1 1 12 12M13 1 1 13" stroke="currentColor" /></svg>Cancel</button>
              <button class="action save" disabled>${checkIcon}Save</button>
            </div>
            <textarea aria-label="Saved notes" readonly></textarea>
          </section>
          <button class="action solid continue">${checkIcon}Continue</button>
        </div>
      </div>
      <span class="dot"></span>
      <div class="recorder">
        ${testCompleteIcon(34)}<i></i>
        <button aria-label="Pause"><svg width="16" height="15" viewBox="0 0 16 15"><path d="M0 0h7v15H0zM9 0h7v15H9z" fill="#0af" /></svg></button>
        <button aria-label="Stop"><svg width="15" height="15" viewBox="0 0 15 15"><path d="M0 0h15v15H0z" fill="#0af" /></svg></button>
      </div>
      <div class="tip"><span>Playback</span>Odyssey
        <svg width="9" height="9" viewBox="0 0 9 9"><path d="M1 9 7 1v8" fill="#fff" stroke="#777" /></svg>
      </div>
      <svg class="cursor" width="12" height="19" viewBox="0 0 12 19"><path d="M.5.500v15l3.500-3.300 2.500 5.800 2.300-1-2.500-5.500h5z" fill="#fff" stroke="#222" /></svg>`;
  }
}

/* ---------- two desktops side by side ---------- */

@customElement("app-root")
export class AppRoot extends LitElement {
  static styles = css`
    :host { display: grid; grid-template-columns: 1366fr 1920fr; height: 100vh; background: #000; }
    .desk { display: flex; flex-direction: column; min-width: 0; min-height: 0; }
    .desk.small { height: calc(100vh * 768 / 1080); }
    report-browser, odyssey-window { flex: 1; }
  `;

  private left: TaskItem[] = [
    { name: "File Explorer", icon: folderIcon }, { name: "Firefox", icon: firefoxIcon },
    { name: "Teams", icon: teamsIcon, running: true }, { name: "Window", icon: appWindowIcon },
    { name: "Database tools", icon: databaseIcon }, { name: "Internet Explorer", icon: explorerIcon, running: true },
  ];

  private right: TaskItem[] = [
    { name: "Chrome", icon: chromeIcon, running: true }, { name: "File Explorer", icon: folderIcon, running: true },
    { name: "Server manager", icon: serverIcon, running: true }, { name: "Window", icon: appWindowIcon, running: true },
    { name: "Notepad", icon: noteEditIcon, running: true }, { name: "Internet Explorer", icon: explorerIcon, running: true },
    { name: "TestComplete", icon: testCompleteIcon(24), running: true }, { name: "Odyssey", icon: odysseyAppIcon, running: true, active: true },
  ];

  render() {
    return html`
      <div class="desk small"><report-browser></report-browser><task-bar .items=${this.left}></task-bar></div>
      <div class="desk"><odyssey-window></odyssey-window><task-bar full .items=${this.right}></task-bar></div>`;
  }
}
